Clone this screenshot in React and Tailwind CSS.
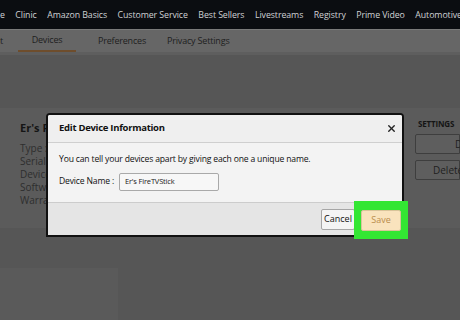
import { X } from "lucide-react";

const navItems = [
  "e",
  "Clinic",
  "Amazon Basics",
  "Customer Service",
  "Best Sellers",
  "Livestreams",
  "Registry",
  "Prime Video",
  "Automotive",
];

const details = ["Type :", "Serial number :", "Device :", "Software Version :", "Warranty :"];

export default function App() {
  return (
    <div className="relative w-[460px] h-[320px] overflow-hidden bg-[#565656] font-['Open_Sans',sans-serif]">
      {/* Top nav */}
      <div className="h-[29px] bg-[#0b0d11] flex items-center gap-[10.5px] pt-[3px] text-[8.8px] text-[#cfd1d4] whitespace-nowrap tracking-[-0.01em]">
        {navItems.map((item) => (
          <span key={item}>{item}</span>
        ))}
      </div>

      {/* Tabs */}
      <div className="h-[23px] bg-[#666666] border-t border-[#7a7a7a] flex items-stretch text-[9px] text-[#1e1e1e] whitespace-nowrap tracking-[-0.02em]">
        <div className="w-[18px] flex items-center">t</div>
        <div className="w-[58px] flex items-center justify-center border-b-2 border-[#6e4d2c]">Devices</div>
        <div className="w-[90px] flex items-center justify-center pl-[2px]">Preferences</div>
        <div className="flex items-center pl-[1px]">Privacy Settings</div>
      </div>
      <div className="h-[3px] bg-[#5e5e5e]" />

      {/* Page content */}
      <div className="mt-[53px] h-[120px] bg-[#5b5b5b] flex justify-between">
        <div className="pl-[20px] pt-[12px]">
          <div className="text-[11px] font-bold text-[#151515]">Er's FireTVStick</div>
          <div className="mt-[5px] flex flex-col gap-[1px] text-[10px] text-[#2e2e2e] leading-[12px]">
            {details.map((d) => (
              <span key={d}>{d}</span>
            ))}
          </div>
        </div>
        <div className="w-[45px] pt-[10px] flex flex-col">
          <div className="pl-[3px] text-[8px] font-bold text-[#151515] whitespace-nowrap tracking-[-0.02em]">SETTINGS</div>
          <div className="mt-[4px] h-[20px] bg-[#5e5e5e] border border-[#3e3e3e] rounded-l-[2px] flex items-center text-[10px] text-[#1e1e1e]">
            <span className="pl-[39px]">D</span>
          </div>
          <div className="mt-[6px] h-[20px] bg-[#5e5e5e] border border-[#3e3e3e] rounded-l-[2px] flex items-center text-[10px] text-[#1e1e1e] whitespace-nowrap">
            <span className="pl-[17px]">Delete Device</span>
          </div>
        </div>
      </div>
      <div className="mt-[40px] w-[118px] h-[60px] bg-[#5a5a5a]" />

      {/* Modal */}
      <div className="absolute left-[46px] top-[113px] w-[358px] h-[124px] bg-[#f3f3f3] border-2 border-[#111111] rounded-t-[4px] flex flex-col overflow-hidden">
        <div className="h-[28px] bg-[#efefef] border-b border-[#cfcfcf] flex items-center justify-between pl-[11px] pr-[5px]">
          <span className="text-[9.5px] font-bold text-[#111111] tracking-[-0.03em]">Edit Device Information</span>
          <X size={11} strokeWidth={3} className="text-[#222222]" />
        </div>
        <div className="flex-1 pl-[11px] pt-[10px] text-[8.6px] text-[#111111] tracking-[-0.02em]">
          <div>You can tell your devices apart by giving each one a unique name.</div>
          <div className="mt-[7px] flex items-center gap-[5px]">
            <span>Device Name :</span>
            <div className="w-[100px] h-[18px] bg-[#f7f7f7] border border-[#a9a9a9] rounded-[2px] flex items-center pl-[5px] text-[7.5px] text-[#222222]">
              Er's FireTVStick
            </div>
          </div>
        </div>
        <div className="h-[33px] bg-[#e5e5e5] border-t border-[#cccccc] flex items-center justify-end pr-[4px] gap-[8px]">
          <div className="w-[34px] h-[21px] bg-[#f4f4f4] border border-[#a6a6a6] rounded-[2px] flex items-center justify-center text-[9px] text-[#111111]">
            Cancel
          </div>
          <div className="w-[35px] h-[21px]" />
        </div>
      </div>

      {/* Highlight around Save */}
      <div className="absolute left-[354px] top-[201px] w-[54px] h-[38px] bg-[#33e633] flex items-center justify-center">
        <div className="w-[40px] h-[21px] bg-[#f9e3bd] border border-[#d8c49a] rounded-[2px] flex items-center justify-center text-[9px] text-[#b98d4c]">
          Save
        </div>
      </div>
    </div>
  );
}
